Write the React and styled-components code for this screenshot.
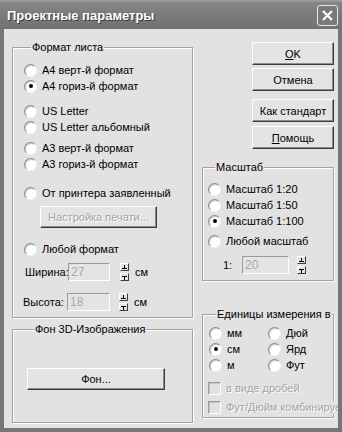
import React from "react";
import styled, { createGlobalStyle } from "styled-components";

const GlobalStyle = createGlobalStyle`
  html, body { margin: 0; padding: 0; background: #fff; }
  body { font-family: "Liberation Sans", Arial, sans-serif; font-size: 11px; color: #000; }
`;

const Window = styled.div`
  width: 342px;
  height: 432px;
  box-sizing: border-box;
  display: flex;
  flex-direction: column;
  background: #767676;
  overflow: hidden;
`;

const TitleBar = styled.div`
  height: 29px;
  flex: none;
  display: flex;
  align-items: center;
  justify-content: space-between;
  padding: 0 4px 0 7px;
  background: linear-gradient(#a0a0a0 0, #858585 3px, #7b7b7b 50%, #727272 100%);
`;

const Title = styled.div`
  color: #fff;
  font-weight: bold;
  font-size: 13px;
  text-shadow: 1px 1px 0 #3a3a3a;
  padding-top: 1px;
`;

const CloseBox = styled.div`
  width: 21px;
  height: 21px;
  box-sizing: border-box;
  border: 1px solid #e8e8e8;
  border-radius: 3px;
  background: #7a7a7a;
  display: flex;
  align-items: center;
  justify-content: center;
  margin-top: 2px;
`;

const Body = styled.div`
  flex: 1;
  margin: 0 4px 4px 4px;
  background: #e2e2e2;
  display: flex;
  gap: 9px;
  padding: 12px 4px 5px 8px;
  overflow: hidden;
`;

const Column = styled.div`
  width: ${p => p.$w}px;
  flex: none;
  display: flex;
  flex-direction: column;
`;

const Group = styled.fieldset`
  margin: ${p => p.$mt || 0}px 0 0 0;
  padding: ${p => p.$pad};
  min-width: 0;
  border: 1px solid #a2a2a2;
  box-shadow: 1px 1px 0 #fff, inset 1px 1px 0 #fff;
  display: flex;
  flex-direction: column;
  flex: ${p => (p.$grow ? 1 : "none")};
`;

const Legend = styled.legend`
  margin-left: 7px;
  padding: 0 1px;
  line-height: 13px;
  background: #e2e2e2;
`;

const Row = styled.div`
  display: flex;
  align-items: center;
  height: ${p => p.$h || 16}px;
  margin-top: ${p => p.$mt || 0}px;
  gap: 5px;
  white-space: nowrap;
`;

const Radio = styled.span`
  width: 13px;
  height: 13px;
  box-sizing: border-box;
  flex: none;
  border-radius: 50%;
  background: #fff;
  border: 1px solid;
  border-color: #8c8c8c #f2f2f2 #f2f2f2 #8c8c8c;
  box-shadow: inset 1px 1px 0 #c9c9c9;
  display: flex;
  align-items: center;
  justify-content: center;
  &::after {
    content: "";
    width: 4px;
    height: 4px;
    border-radius: 50%;
    background: #000;
    display: ${p => (p.$checked ? "block" : "none")};
  }
`;

const Check = styled.span`
  width: 13px;
  height: 13px;
  box-sizing: border-box;
  flex: none;
  background: #e2e2e2;
  border: 1px solid;
  border-color: #9a9a9a #fff #fff #9a9a9a;
  box-shadow: inset 1px 1px 0 #c4c4c4;
`;

const Label = styled.span`
  color: ${p => (p.$disabled ? "#a4a4a4" : "#000")};
  text-shadow: ${p => (p.$disabled ? "1px 1px 0 #fff" : "none")};
  background: #e2e2e2;
  width: ${p => (p.$w ? `${p.$w}px` : "auto")};
  flex: none;
`;

const Button = styled.button`
  font: inherit;
  color: #000;
  width: ${p => p.$w || 82}px;
  height: ${p => p.$h || 23}px;
  margin: ${p => p.$m || 0};
  align-self: ${p => p.$align || "auto"};
  padding: 0;
  background: #e4e4e4;
  border: 1px solid;
  border-color: #fff #3c3c3c #3c3c3c #fff;
  box-shadow: inset -1px -1px 0 #8c8c8c;
  flex: none;
  &:disabled {
    color: #a4a4a4;
    text-shadow: 1px 1px 0 #fff;
  }
`;

const Field = styled.div`
  width: ${p => p.$w}px;
  height: 18px;
  box-sizing: border-box;
  flex: none;
  border: 1px solid;
  border-color: #9a9a9a #fff #fff #9a9a9a;
  background: #e4e4e4;
  color: #a8a8a8;
  padding-left: 2px;
  line-height: 16px;
  font-size: 12px;
`;

const Spin = styled.div`
  display: flex;
  flex-direction: column;
  gap: 2px;
  margin: 0 ${p => p.$mr || 0}px 0 ${p => p.$ml || 0}px;
  flex: none;
`;

const SpinBtn = styled.div`
  width: 9px;
  height: 8px;
  box-sizing: border-box;
  background: #e4e4e4;
  border: 1px solid;
  border-color: #fff #3c3c3c #3c3c3c #fff;
  display: flex;
  align-items: center;
  justify-content: center;
`;

const ButtonStack = styled.div`
  display: flex;
  flex-direction: column;
  align-items: flex-end;
  margin-top: 1px;
`;

const UnitGrid = styled.div`
  display: grid;
  grid-template-columns: 59px 1fr;
  grid-auto-rows: 16px;
  margin-top: 4px;
`;

const Overflow = styled.span`
  background: #e2e2e2;
  position: relative;
  z-index: 1;
`;

function Spinner({ ml, mr }) {
  return (
    <Spin $ml={ml} $mr={mr}>
      <SpinBtn>
        <svg width="5" height="5" viewBox="0 0 5 5">
          <path d="M2 0h1v3h-1z M0 3h5v1h-5z" fill="#000" />
        </svg>
      </SpinBtn>
      <SpinBtn>
        <svg width="5" height="5" viewBox="0 0 5 5">
          <path d="M0 1h5v1h-5z M2 2h1v3h-1z" fill="#000" />
        </svg>
      </SpinBtn>
    </Spin>
  );
}

function Opt({ checked, children, mt }) {
  return (
    <Row $mt={mt}>
      <Radio $checked={checked} />
      <Label>{children}</Label>
    </Row>
  );
}

export default function App() {
  return (
    <>
      <GlobalStyle />
      <Window>
        <TitleBar>
          <Title>Проектные параметры</Title>
          <CloseBox>
            <svg width="13" height="13" viewBox="0 0 13 13">
              <path d="M2 2L11 11M11 2L2 11" stroke="#fff" strokeWidth="2.2" />
            </svg>
          </CloseBox>
        </TitleBar>
        <Body>
          <Column $w={181}>
            <Group $pad="8px 0 6px 11px">
              <Legend>Формат листа</Legend>
              <Opt>А4 верт-й формат</Opt>
              <Opt checked>А4 гориз-й формат</Opt>
              <Opt mt={9}>US Letter</Opt>
              <Opt>US Letter альбомный</Opt>
              <Opt mt={5}>А3 верт-й формат</Opt>
              <Opt>А3 гориз-й формат</Opt>
              <Opt mt={13}>От принтера заявленный</Opt>
              <Button disabled $w={117} $h={22} $m="5px 0 0 16px">
                Настройка печати...
              </Button>
              <Opt mt={13}>Любой формат</Opt>
              <Row $h={18} $mt={6} style={{ gap: 0 }}>
                <Label $w={43} style={{ marginLeft: 1 }}>Ширина:</Label>
                <Field $w={42}>27</Field>
                <Spinner ml={10} mr={6} />
                <Label>см</Label>
              </Row>
              <Row $h={18} $mt={12} style={{ gap: 0 }}>
                <Label $w={44} style={{ marginLeft: -1 }}>Высота:</Label>
                <Field $w={43}>18</Field>
                <Spinner ml={9} mr={6} />
                <Label>см</Label>
              </Row>
            </Group>
            <Group $mt={5} $grow $pad="32px 0 0 14px">
              <Legend>Фон 3D-Изображения</Legend>
              <Button $w={138} $h={22}>Фон...</Button>
            </Group>
          </Column>
          <Column $w={132}>
            <ButtonStack>
              <Button><u>О</u>K</Button>
              <Button $m="3px 0 0 0">Отмена</Button>
              <Button $m="8px 0 0 0">Как стандарт</Button>
              <Button $m="4px 0 0 0"><u>П</u>омощь</Button>
            </ButtonStack>
            <Group $mt={12} $pad="7px 0 6px 5px">
              <Legend>Масштаб</Legend>
              <Opt>Масштаб 1:20</Opt>
              <Opt>Масштаб 1:50</Opt>
              <Opt checked>Масштаб 1:100</Opt>
              <Opt mt={4}>Любой масштаб</Opt>
              <Row $h={18} $mt={7} style={{ gap: 0 }}>
                <Label $w={19} style={{ marginLeft: 15 }}>1:</Label>
                <Field $w={47}>20</Field>
                <Spinner ml={8} />
              </Row>
            </Group>
            <Group $mt={27} $pad="0 0 2px 6px">
              <Legend>Единицы измерения в</Legend>
              <UnitGrid>
                <Row><Radio /><Label>мм</Label></Row>
                <Row><Radio /><Label>Дюй</Label></Row>
                <Row><Radio $checked /><Label>см</Label></Row>
                <Row><Radio /><Label>Ярд</Label></Row>
                <Row><Radio /><Label>м</Label></Row>
                <Row><Radio /><Label>Фут</Label></Row>
              </UnitGrid>
              <Row $mt={7} style={{ marginLeft: -1 }}>
                <Check />
                <Label $disabled>в виде дробей</Label>
              </Row>
              <Row $mt={3} style={{ marginLeft: -1 }}>
                <Check />
                <Overflow>
                  <Label $disabled>Фут/Дюйм комбинирует</Label>
                </Overflow>
              </Row>
            </Group>
          </Column>
        </Body>
      </Window>
    </>
  );
}
